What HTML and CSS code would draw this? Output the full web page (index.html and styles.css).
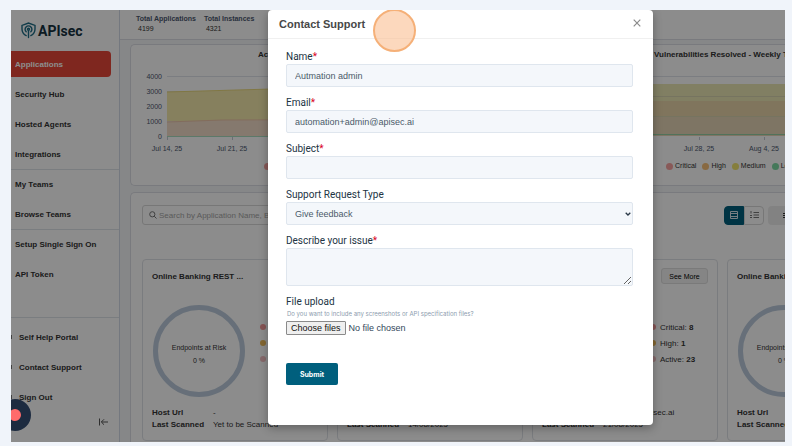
FILE: index.html
```html
<!DOCTYPE html>
<html lang="en">
<head>
  <meta charset="UTF-8">
  <meta name="viewport" content="width=device-width, initial-scale=1.0">
  <title>APIsec - Contact Support</title>
  <link rel="stylesheet" href="styles.css">
</head>
<body>
  <div class="frame">
    <!-- Sidebar -->
    <aside class="sidebar">
      <div class="logo">
        <svg width="15" height="17" viewBox="0 0 15 17" fill="none" stroke="#1d6c85" stroke-width="1.4" stroke-linecap="round">
          <path d="M5.2 13.6C2.400 12.300 1 10 1 7V3.400L7.500 1 14 3.400V7c0 3-1.400 5.300-4.200 6.600"/>
          <path d="M5.200 9.800a3.400 3.400 0 1 1 4.600 0"/>
          <circle cx="7.500" cy="7.300" r="1"/>
          <path d="M7.500 8.800V15.500"/>
        </svg>
        <span>APIsec</span>
      </div>
      <nav class="menu">
        <a href="#" class="active">Applications</a>
        <a href="#">Security Hub</a>
        <a href="#">Hosted Agents</a>
        <a href="#">Integrations</a>
        <a href="#" class="divided">My Teams</a>
        <a href="#">Browse Teams</a>
        <a href="#" class="divided">Setup Single Sign On</a>
        <a href="#">API Token</a>
      </nav>
      <nav class="menu menu-bottom">
        <a href="#"><i class="stub"></i>Self Help Portal</a>
        <a href="#"><i class="stub"></i>Contact Support</a>
        <a href="#"><i class="stub"></i>Sign Out</a>
      </nav>
      <button class="collapse" aria-label="Collapse menu">
        <svg width="9" height="8" viewBox="0 0 9 8" fill="none" stroke="#555" stroke-width="1">
          <path d="M.5 0.500v7M9 4H2.500M5 1.300L2.300 4 5 6.700"/>
        </svg>
      </button>
    </aside>

    <!-- Dashboard -->
    <main class="main">
      <header class="totals">
        <div><b>Total Applications</b><span>4199</span></div>
        <div><b>Total Instances</b><span>4321</span></div>
      </header>

      <section class="panel charts">
        <div class="chart">
          <h2>Active Vulnerabilities</h2>
          <svg class="plot" width="390" height="90" viewBox="0 0 390 90">
            <path d="M25 9.500H380M25 24.500H380M25 39.500H380M25 54.500H380M25 69.500H380" stroke="#e0e4ec"/>
            <path d="M25 25L130 22 380 22V54H25Z" fill="#f5e9ac"/>
            <path d="M25 55L80 53 380 52V69H25Z" fill="#f2dcc8"/>
            <path d="M25 25L130 22H380" stroke="#ead97c" fill="none"/>
            <path d="M25 55L80 53 380 52" stroke="#eec5a8" fill="none"/>
            <path d="M25 69.500H380" stroke="#a8dcc0"/>
            <path d="M25.500 70v3M90.500 70v3" stroke="#c4c9d4"/>
            <g text-anchor="end">
              <text x="20" y="12">4000</text>
              <text x="20" y="27">3000</text>
              <text x="20" y="42">2000</text>
              <text x="20" y="57">1000</text>
              <text x="20" y="72">0</text>
            </g>
            <g text-anchor="middle">
              <text x="25" y="84">Jul 14, 25</text>
              <text x="90" y="84">Jul 21, 25</text>
            </g>
          </svg>
          <div class="legend">
            <span class="critical">Critical</span><span class="high">High</span><span class="medium">Medium</span><span class="low">Low</span>
          </div>
        </div>
        <div class="chart resolved">
          <h2>Vulnerabilities Resolved - Weekly Trend</h2>
          <svg class="plot" width="390" height="90" viewBox="0 0 390 90">
            <path d="M25 9.500H380" stroke="#e0e4ec"/>
            <path d="M25 17H380V34H25Z" fill="#ece8b4"/>
            <path d="M25 34H380V50H25Z" fill="#ead5aa"/>
            <path d="M25 50H380V69H25Z" fill="#e5d6b6"/>
            <path d="M25 29.500H380M25 49.500H380" stroke="#d8d3b0"/>
            <path d="M25 67.500H380" stroke="#94cfa4"/>
            <path d="M155.500 70v3M220.500 70v3" stroke="#c4c9d4"/>
            <g text-anchor="middle">
              <text x="155" y="84">Jul 28, 25</text>
              <text x="220" y="84">Aug 4, 25</text>
            </g>
          </svg>
          <div class="legend">
            <span class="critical">Critical</span><span class="high">High</span><span class="medium">Medium</span><span class="low">Low</span>
          </div>
        </div>
      </section>

      <section class="panel apps">
        <div class="toolbar">
          <div class="search">
            <svg width="8" height="8" viewBox="0 0 8 8" fill="none" stroke="#777" stroke-width="1">
              <circle cx="3.300" cy="3.300" r="2.600"/><path d="M5.200 5.200L7.500 7.500"/>
            </svg>
            <input type="text" aria-label="Search applications" placeholder="Search by Application Name, Branch or Tag">
          </div>
          <div class="views">
            <button class="on" aria-label="Card view">
              <svg width="8" height="8" viewBox="0 0 8 8" fill="none" stroke="#dbe8ee"><path d="M.5.5h7v7h-7zM.5 2.500h7M.5 5.500h7"/></svg>
            </button>
            <button aria-label="List view">
              <svg width="9" height="8" viewBox="0 0 9 8" fill="none" stroke="#777"><path d="M3.500 1.500H9M3.500 4H9M3.500 6.500H9M1 0v2.500M0 4.500h2M0 6.500h2"/></svg>
            </button>
          </div>
          <button class="filter" aria-label="Filter"><svg width="8" height="7" viewBox="0 0 8 7" stroke="#333"><path d="M0 1.500h8M0 3.500h8M0 5.500h8"/></svg></button>
        </div>

        <div class="cards">
          <article class="card">
            <div class="card-head"><h3>Online Banking REST ...</h3></div>
            <div class="risk">
              <div class="ring"><span>Endpoints at Risk</span><span>0 %</span></div>
              <ul><li></li><li></li><li></li></ul>
            </div>
            <dl><dt>Host Url</dt><dd>-</dd><dt>Last Scanned</dt><dd>Yet to be Scanned</dd></dl>
          </article>
          <article class="card">
            <div class="card-head"></div>
            <div class="risk">
              <div class="ring"></div>
            </div>
            <dl><dt>Host Url</dt><dd>-</dd><dt>Last Scanned</dt><dd>14/08/2025</dd></dl>
          </article>
          <article class="card">
            <div class="card-head"><button>See More</button></div>
            <div class="risk">
              <div class="ring"></div>
              <ul><li>Critical: <b>8</b></li><li>High: <b>1</b></li><li>Active: <b>23</b></li></ul>
            </div>
            <dl><dt>Host Url</dt><dd>http://bank.apisec.ai</dd><dt>Last Scanned</dt><dd>21/08/2025</dd></dl>
          </article>
          <article class="card">
            <div class="card-head"><h3>Online Banking REST ...</h3></div>
            <div class="risk">
              <div class="ring"><span>Endpoints at Risk</span><span>0 %</span></div>
            </div>
            <dl><dt>Host Url</dt><dd>-</dd><dt>Last Scanned</dt><dd>-</dd></dl>
          </article>
        </div>
      </section>
    </main>

    <!-- Contact Support dialog -->
    <div class="overlay">
      <div class="modal" role="dialog" aria-labelledby="modal-title">
        <div class="modal-head">
          <h1 id="modal-title">Contact Support</h1>
          <button class="close" aria-label="Close">
            <svg width="8" height="8" viewBox="0 0 8 8" stroke="#8a8a8a" stroke-width="1.200"><path d="M.7.7l6.600 6.600M7.300.7L.7 7.300"/></svg>
          </button>
        </div>
        <form class="modal-body">
          <label for="name">Name<em>*</em></label>
          <input type="text" id="name" value="Autmation admin">

          <label for="email">Email<em>*</em></label>
          <input type="text" id="email" value="automation+admin@apisec.ai">

          <label for="subject">Subject<em>*</em></label>
          <input type="text" id="subject">

          <label for="type">Support Request Type</label>
          <div class="select">
            <select id="type">
              <option>Give feedback</option>
            </select>
            <svg width="6" height="4" viewBox="0 0 6 4" fill="none" stroke="#2b3a48" stroke-width="1.300"><path d="M.7.7L3 3 5.300.7"/></svg>
          </div>

          <label for="issue">Describe your issue<em>*</em></label>
          <textarea id="issue"></textarea>

          <label for="files">File upload</label>
          <small>Do you want to include any screenshots or API specification files?</small>
          <div class="file">
            <input type="file" id="files" multiple>
            <label for="files">Choose files</label>
            <span>No file chosen</span>
          </div>

          <button type="submit" class="submit">Submit</button>
        </form>
      </div>
    </div>

    <div class="recorder"></div>
    <div class="click-spot"></div>
  </div>
</body>
</html>
```
FILE: styles.css
```css
* {
  box-sizing: border-box;
}

body {
  margin: 0;
  padding: 10px 7px 4px 11px;
  background: #f0f4fa;
  font-family: "Liberation Sans", Arial, sans-serif;
  font-size: 8px;
  color: #333;
}

h1, h2, h3, ul, dl, dd {
  margin: 0;
  padding: 0;
}

button, input, select, textarea {
  font-family: inherit;
  font-size: inherit;
}

.frame {
  position: relative;
  display: flex;
  height: calc(100vh - 14px);
  overflow: hidden;
  background: #f5f6f8;
}

/* Sidebar */
.sidebar {
  display: flex;
  flex-direction: column;
  flex: 0 0 109px;
  background: #fff;
  border-right: 1px solid #d3dbe8;
}

.logo {
  display: flex;
  align-items: center;
  gap: 2px;
  height: 41px;
  padding-left: 10px;
  font: bold 14px Roboto, sans-serif;
  color: #16323f;
}

.menu {
  display: flex;
  flex-direction: column;
}

.menu a {
  display: flex;
  align-items: center;
  height: 30px;
  padding-left: 4px;
  font-size: 8px;
  font-weight: bold;
  color: #333;
  text-decoration: none;
  white-space: nowrap;
}

.menu a.active {
  height: 26px;
  margin: 0 8px 2px 0;
  background: #e8473a;
  color: #fff;
  border-radius: 0 4px 4px 0;
}

.menu a.divided {
  border-top: 1px solid #dfe3ea;
}

.menu-bottom {
  margin-top: 28px;
  padding-top: 4px;
  border-top: 1px solid #dfe3ea;
}

.menu-bottom a {
  padding-left: 0;
}

.stub {
  width: 1px;
  height: 4px;
  margin-right: 7px;
  background: #777;
}

.collapse {
  align-self: flex-end;
  margin: 6px 11px 0 0;
  padding: 0;
  border: 0;
  background: none;
}

/* Dashboard */
.main {
  flex: 1;
  min-width: 0;
}

.totals {
  display: flex;
  gap: 8px;
  height: 30px;
  padding: 4px 16px;
  background: #fff;
  border-bottom: 1px solid #dcdfe5;
}

.totals b {
  display: block;
  font-size: 7px;
  line-height: 10px;
  color: #4c5870;
}

.totals span {
  padding-left: 2px;
  font-size: 7px;
  line-height: 10px;
}

.panel {
  margin-left: 10px;
  background: #fff;
  border: 1px solid #dcdfe5;
  border-right: 0;
  border-radius: 5px 0 0 5px;
}

.charts {
  display: flex;
  gap: 12px;
  height: 142px;
  margin-top: 4px;
  padding: 4px 0 0 11px;
}

.chart {
  flex: 0 0 390px;
}

.chart h2 {
  padding-left: 116px;
  font-size: 8px;
  line-height: 12px;
}

.resolved h2 {
  padding-left: 110px;
}

.plot {
  display: block;
  margin-top: 6px;
}

.plot text {
  font-size: 7px;
  fill: #4c5870;
}

.legend {
  display: flex;
  gap: 6px;
  padding: 5px 0 0 122px;
  font-size: 7px;
  line-height: 8px;
}

.legend span {
  display: flex;
  align-items: center;
  gap: 2px;
}

.legend span::before {
  content: "";
  width: 7px;
  height: 7px;
  border-radius: 50%;
  background: currentColor;
}

.legend .critical::before { background: #f8a3a0; }
.legend .high::before { background: #f7c078; }
.legend .medium::before { background: #f2e570; }
.legend .low::before { background: #7fdba5; }

.apps {
  height: 270px;
  margin-top: 6px;
  padding: 12px 0 0 11px;
}

.toolbar {
  display: flex;
  align-items: center;
  height: 20px;
  margin-bottom: 34px;
}

.search {
  display: flex;
  align-items: center;
  gap: 2px;
  flex: 0 0 200px;
  height: 20px;
  padding-left: 6px;
  border: 1px solid #d9d9d9;
  border-radius: 3px;
}

.search input {
  width: 180px;
  padding: 0;
  border: 0;
  outline: none;
}

.search input::placeholder {
  color: #a5a5a5;
}

.views {
  display: flex;
  margin-left: auto;
  border-radius: 4px;
}

.views button {
  display: flex;
  align-items: center;
  justify-content: center;
  width: 20px;
  height: 19px;
  padding: 0;
  border: 1px solid #d9d9d9;
  border-radius: 0 4px 4px 0;
  background: #fff;
}

.views .on {
  background: #005f7d;
  border-color: #005f7d;
  border-radius: 4px 0 0 4px;
}

.filter {
  width: 17px;
  height: 19px;
  margin-left: 4px;
  padding: 0;
  border: 0;
  border-radius: 4px 0 0 4px;
  background: #ededed;
}

.filter svg {
  display: block;
  margin-left: 15px;
}

.cards {
  display: flex;
  gap: 9px;
}

.card {
  flex: 0 0 186px;
  height: 182px;
  padding: 8px 9px 0;
  border: 1px solid #dfe2e8;
  border-radius: 4px;
}

.card-head {
  display: flex;
  align-items: center;
  height: 16px;
}

.card-head h3 {
  font-size: 8px;
}

.card-head button {
  width: 47px;
  height: 16px;
  margin-left: auto;
  padding: 0;
  border: 1px solid #dedede;
  border-radius: 3px;
  background: #f3f3f3;
  font-size: 7px;
}

.risk {
  display: flex;
  gap: 15px;
  margin: 21px 0 10px 1px;
}

.ring {
  display: flex;
  flex-direction: column;
  align-items: center;
  justify-content: center;
  gap: 6px;
  flex: 0 0 92px;
  height: 92px;
  padding-top: 5px;
  border: 5px solid #bccbdc;
  border-radius: 50%;
  font-size: 7px;
}

.risk ul {
  padding-top: 15px;
  list-style: none;
  line-height: 16px;
  white-space: nowrap;
}

.risk li::before {
  content: "";
  display: inline-block;
  width: 6px;
  height: 6px;
  margin-right: 4px;
  border-radius: 50%;
  background: #f59a9a;
}

.risk li:nth-child(2)::before { background: #eebb5a; }
.risk li:nth-child(3)::before { background: #f5c0c4; }

.card dl {
  display: grid;
  grid-template-columns: 61px 1fr;
  line-height: 12px;
  white-space: nowrap;
}

.card dt {
  font-weight: bold;
}

/* Dialog */
.overlay {
  position: absolute;
  inset: 0;
  padding: 0 132px 0 257px;
  background: rgba(0, 0, 0, 0.45);
}

.modal {
  background: #fff;
  border-radius: 4px;
  box-shadow: 0 3px 10px rgba(0, 0, 0, 0.3);
}

.modal-head {
  display: flex;
  align-items: center;
  justify-content: space-between;
  height: 29px;
  padding: 0 12px 0 11px;
  border-bottom: 1px solid #f0f0f0;
}

.modal-head h1 {
  font-size: 11px;
  color: #484848;
}

.close {
  padding: 0;
  border: 0;
  background: none;
}

.modal-body {
  display: flex;
  flex-direction: column;
  padding: 10px 20px 40px 18px;
}

.modal-body > label {
  height: 15px;
  font: 10px/15px Roboto, sans-serif;
  color: #213343;
}

.modal-body em {
  font-style: normal;
  color: #d9001b;
}

.modal-body input[type="text"],
.modal-body select,
.modal-body textarea {
  width: 100%;
  height: 23px;
  margin: 0 0 8px;
  padding: 0 8px;
  border: 1px solid #dfe6ee;
  border-radius: 2px;
  background: #f4f7fb;
  font-size: 9px;
  color: #4b5a69;
  outline: none;
}

.select {
  position: relative;
}

.modal-body select {
  display: block;
  appearance: none;
}

.select svg {
  position: absolute;
  top: 10px;
  right: 2px;
}

.modal-body textarea {
  height: 38px;
}

.modal-body small {
  padding-left: 1px;
  font: 6px/10px Inter, sans-serif;
  color: #8c9bae;
}

.file {
  display: flex;
  align-items: center;
  gap: 3px;
  margin-top: 2px;
  font-size: 9px;
  color: #33475b;
}

.file input {
  position: absolute;
  opacity: 0;
  width: 1px;
  height: 1px;
}

.file label {
  padding: 0 4px;
  border: 1px solid #8a8a8a;
  border-radius: 1px;
  background: #efefef;
  line-height: 12px;
  color: #111;
}

.submit {
  align-self: flex-start;
  width: 52px;
  height: 22px;
  margin-top: 28px;
  padding: 0;
  border: 0;
  border-radius: 2px;
  background: #005f7d;
  color: #fff;
  font: bold 7px Inter, sans-serif;
}

/* Floating marks */
.recorder {
  position: absolute;
  left: -12px;
  bottom: 11px;
  width: 32px;
  height: 32px;
  border: 10px solid #1d2b40;
  border-radius: 50%;
  background: #ff6b6b;
}

.click-spot {
  position: absolute;
  left: 362px;
  top: -1px;
  width: 43px;
  height: 43px;
  border: 2px solid #f5b078;
  border-radius: 50%;
  background: rgba(250, 190, 145, 0.6);
}
```
